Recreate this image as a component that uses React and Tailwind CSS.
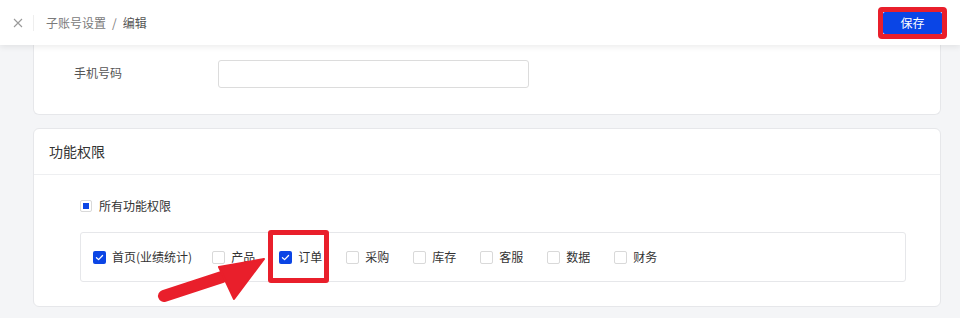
import React from 'react';

const perms = [
  { label: '首页(业绩统计)', checked: true },
  { label: '产品', checked: false },
  { label: '订单', checked: true, marked: true },
  { label: '采购', checked: false },
  { label: '库存', checked: false },
  { label: '客服', checked: false },
  { label: '数据', checked: false },
  { label: '财务', checked: false },
];

function Checkbox({ checked }) {
  if (checked) {
    return (
      <span className="flex h-[13px] w-[13px] items-center justify-center rounded-[2px] bg-[#0b45e5]">
        <svg width="9" height="9" viewBox="0 0 10 10" fill="none">
          <path d="M1.6 5.2 L4 7.4 L8.4 2.8" stroke="#fff" strokeWidth="1.4" strokeLinecap="round" strokeLinejoin="round" />
        </svg>
      </span>
    );
  }
  return <span className="h-[13px] w-[13px] rounded-[2px] border border-[#d9d9d9] bg-white" />;
}

export default function App() {
  return (
    <div
      className="relative h-[318px] w-[960px] overflow-hidden bg-[#f4f5f7] text-[12px] text-[#333]"
      style={{ fontFamily: '"Noto Sans CJK SC", "Noto Sans", sans-serif' }}
    >
      {/* 顶部栏 */}
      <div className="relative z-10 flex h-[45px] items-center bg-white pr-[13px] shadow-[0_2px_6px_rgba(0,0,0,0.08)]">
        <div className="flex w-[33px] justify-center pl-[2px]">
          <svg width="10" height="10" viewBox="0 0 10 10">
            <path d="M1 1 L9 9 M9 1 L1 9" stroke="#9a9a9a" strokeWidth="1.1" />
          </svg>
        </div>
        <div className="h-[16px] w-px bg-[#eeeeee]" />
        <div className="ml-[12px] text-[12px] text-[#7a7a7a]">
          子账号设置<span className="mx-[6px]">/</span><span className="text-[#555]">编辑</span>
        </div>
        <div className="ml-auto rounded-[4px] border-[5px] border-[#e91f2b]">
          <button className="flex h-[22px] w-[59px] items-center justify-center rounded-[2px] bg-[#0a45e6] text-[12px] text-white">
            保存
          </button>
        </div>
      </div>

      <div className="ml-[33px] mr-[19px]">
        {/* 基本信息（已滚动） */}
        <div className="flex h-[70px] items-start rounded-b-[6px] border-x border-b border-[#e6e7ea] bg-white">
          <div className="mt-[19px] w-[184px] pl-[40px] text-[12px] text-[#555]">手机号码</div>
          <div className="mt-[15px] h-[28px] w-[311px] rounded-[3px] border border-[#dcdcdc] bg-white" />
        </div>

        {/* 功能权限 */}
        <div className="mt-[13px] h-[179px] rounded-[6px] border border-[#e6e7ea] bg-white">
          <div className="flex h-[46px] items-center border-b border-[#eeeff1] pl-[15px] text-[14px] text-[#333]">
            功能权限
          </div>
          <div className="px-[46px] pt-[22px]">
            <div className="flex items-center gap-[7px]">
              <span className="flex h-[12px] w-[12px] items-center justify-center rounded-[2px] border border-[#d9d9d9] bg-white">
                <span className="h-[6px] w-[6px] bg-[#0b45e5]" />
              </span>
              <span>所有功能权限</span>
            </div>
            <div className="mr-[-12px] mt-[17px] flex h-[50px] items-center rounded-[3px] border border-[#e6e7ea] pl-[12px]">
              {perms.map((p, i) => (
                <div key={p.label} className={`relative flex items-center gap-[6px] ${i === 0 ? 'mr-[20px]' : 'mr-[24px]'}`}>
                  <Checkbox checked={p.checked} />
                  <span>{p.label}</span>
                  {p.marked && (
                    <div className="absolute left-[-11px] right-[-7px] top-[-18px] bottom-[-17px] rounded-[3px] border-[5px] border-[#e91f2b]" />
                  )}
                </div>
              ))}
            </div>
          </div>
        </div>
      </div>

      {/* 标注箭头 */}
      <svg className="pointer-events-none absolute left-0 top-0" width="960" height="318">
        <path d="M164 296 L222 277" stroke="#e91f2b" strokeWidth="12" strokeLinecap="round" />
        <polygon points="219,267 264,259 234,299" fill="#e91f2b" stroke="#e91f2b" strokeWidth="2" strokeLinejoin="round" />
      </svg>
    </div>
  );
}
